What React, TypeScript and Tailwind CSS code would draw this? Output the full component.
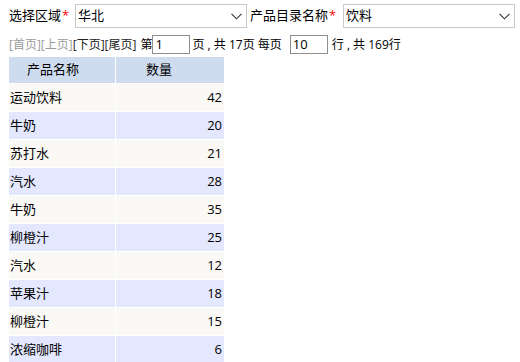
import * as React from "react";

type Row = { name: string; qty: number };

const rows: Row[] = [
  { name: "运动饮料", qty: 42 },
  { name: "牛奶", qty: 20 },
  { name: "苏打水", qty: 21 },
  { name: "汽水", qty: 28 },
  { name: "牛奶", qty: 35 },
  { name: "柳橙汁", qty: 25 },
  { name: "汽水", qty: 12 },
  { name: "苹果汁", qty: 18 },
  { name: "柳橙汁", qty: 15 },
  { name: "浓缩咖啡", qty: 6 },
];

function Chevron() {
  return (
    <svg width="11" height="7" viewBox="0 0 11 7" fill="none" className="shrink-0">
      <path d="M0.5 0.8 L5.5 5.8 L10.5 0.8" stroke="#333" strokeWidth="1.1" />
    </svg>
  );
}

function FakeSelect({ value }: { value: string }) {
  return (
    <div className="flex h-[24px] w-[172px] items-center justify-between border border-[#c8c8c8] bg-white pl-[2px] pr-[4px] text-[13px] text-black">
      <span>{value}</span>
      <Chevron />
    </div>
  );
}

function Label({ text, className }: { text: string; className?: string }) {
  return (
    <span className={["flex items-center text-[13px] text-black", className].filter(Boolean).join(" ")}>
      {text}
      <span className="ml-[1px] text-[#ff0000]">*</span>
    </span>
  );
}

function PageInput({ value }: { value: string }) {
  return (
    <span className="flex h-[19px] w-[38px] items-center border border-[#8f8f8f] bg-white pl-[2px] text-[13px] leading-none text-black">
      {value}
    </span>
  );
}

export default function App() {
  return (
    <div
      className="min-h-[362px] bg-white pl-[9px] pt-[4px] text-black"
      style={{ fontFamily: '"Open Sans", "Noto Sans CJK SC", sans-serif' }}
    >
      <div className="flex h-[24px] items-center">
        <Label text="选择区域" className="w-[66px]" />
        <FakeSelect value="华北" />
        <Label text="产品目录名称" className="ml-[3px] w-[93px]" />
        <FakeSelect value="饮料" />
      </div>

      <div className="mt-[7px] flex h-[19px] items-center whitespace-pre text-[12px]">
        <span className="text-[#9a9a9a]">[首页][上页]</span>
        <span className="text-[#222]">[下页][尾页]</span>
        <span className="ml-[4px]">第</span>
        <PageInput value="1" />
        <span className="ml-[2px]">页 , 共 17页 每页</span>
        <span className="ml-[8px]">
          <PageInput value="10" />
        </span>
        <span className="ml-[4px]">行 , 共 169行</span>
      </div>

      <table className="mt-[3px] w-[215px] border-separate border-spacing-0 text-[13px]">
        <thead>
          <tr>
            <th className="h-[27px] w-[107px] border-b border-r border-white bg-[#cfdcef] pl-[18px] text-left font-normal">
              产品名称
            </th>
            <th className="h-[27px] border-b border-white bg-[#cfdcef] pl-[30px] text-left font-normal">
              数量
            </th>
          </tr>
        </thead>
        <tbody>
          {rows.map((r, i) => {
            const bg = i % 2 === 0 ? "bg-[#faf9f5]" : "bg-[#e4e8fe]";
            return (
              <tr key={i}>
                <td className={`h-[28px] border-b border-r border-white pl-[1px] ${bg}`}>{r.name}</td>
                <td className={`h-[28px] border-b border-white pr-[2px] text-right ${bg}`}>{r.qty}</td>
              </tr>
            );
          })}
        </tbody>
      </table>
    </div>
  );
}
